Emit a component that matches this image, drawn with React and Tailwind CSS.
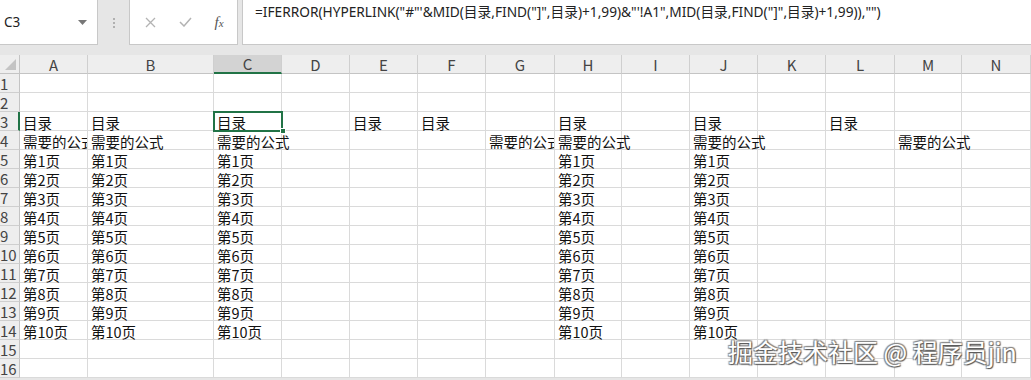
import React from "react";

const COLS = [
  ["A", "w-[68px]"],
  ["B", "w-[126px]"],
  ["C", "w-[68px]"],
  ["D", "w-[68px]"],
  ["E", "w-[68px]"],
  ["F", "w-[68px]"],
  ["G", "w-[69px]"],
  ["H", "w-[67px]"],
  ["I", "w-[68px]"],
  ["J", "w-[68px]"],
  ["K", "w-[68px]"],
  ["L", "w-[69px]"],
  ["M", "w-[67px]"],
  ["N", "w-[69px]"],
];

const DATA = {
  3: { A: "目录", B: "目录", C: "目录", E: "目录", F: "目录", H: "目录", J: "目录", L: "目录" },
  4: { A: "需要的公式", B: "需要的公式", C: "需要的公式", G: "需要的公式", H: "需要的公式", J: "需要的公式", M: "需要的公式" },
};
for (let i = 5; i <= 14; i++) {
  const t = `第${i - 4}页`;
  DATA[i] = { A: t, B: t, C: t, H: t, J: t };
}

const CLIP = { "4A": true, "4G": true };

const cellFont = { fontFamily: '"Noto Sans CJK SC", "Noto Sans", sans-serif' };
const uiFont = { fontFamily: '"Noto Sans", "Noto Sans CJK SC", sans-serif' };

export default function App() {
  const rows = Array.from({ length: 16 }, (_, i) => i + 1);
  return (
    <div className="w-[1031px] h-[380px] overflow-hidden bg-[#e6e6e6] relative" style={uiFont}>
      {/* formula bar */}
      <div className="flex h-[45px]">
        <div className="w-[98px] bg-white border-r border-b border-[#c8c8c8] flex items-center justify-between pl-[4px] pr-[10px]">
          <span className="text-[13.5px] text-[#222] pt-[1px]">C3</span>
          <svg width="9" height="5" viewBox="0 0 9 5"><path d="M0 0 L9 0 L4.5 5 Z" fill="#777" /></svg>
        </div>
        <div className="w-[31px] flex flex-col items-center justify-center gap-[2px]">
          <div className="w-[2px] h-[2px] bg-[#b0b0b0]" />
          <div className="w-[2px] h-[2px] bg-[#b0b0b0]" />
          <div className="w-[2px] h-[2px] bg-[#b0b0b0]" />
        </div>
        <div className="w-[109px] bg-white border-r border-b border-l border-[#c8c8c8] flex items-center">
          <div className="w-[38px] flex justify-center pl-[2px]">
            <svg width="11" height="11" viewBox="0 0 11 11"><path d="M1 1 L10 10 M10 1 L1 10" stroke="#b3b3b3" strokeWidth="1.3" /></svg>
          </div>
          <div className="w-[34px] flex justify-center">
            <svg width="13" height="10" viewBox="0 0 13 10"><path d="M1 5 L5 9 L12 1" stroke="#b3b3b3" strokeWidth="1.5" fill="none" /></svg>
          </div>
          <div className="w-[34px] flex justify-center">
            <span className="italic text-[#555] text-[15px] leading-none" style={{ fontFamily: '"Liberation Serif", serif' }}>
              f<span className="text-[11px]">x</span>
            </span>
          </div>
        </div>
        <div className="w-[4px]" />
        <div className="flex-1 bg-white border-l border-b border-[#c8c8c8] pl-[12px] pt-[2px]">
          <div className="text-[13.7px] leading-[20px] text-[#222] whitespace-nowrap" style={uiFont}>
            =IFERROR(HYPERLINK("#"'&amp;MID(目录,FIND("]",目录)+1,99)&amp;"'!A1",MID(目录,FIND("]",目录)+1,99)),"")
          </div>
        </div>
      </div>
      <div className="h-[10px]" />

      {/* sheet */}
      <div className="relative bg-white">
        {/* column header row */}
        <div className="flex h-[19px] bg-[#eeeeee]">
          <div className="w-[20px] border-r border-b border-[#c4c4c4] relative">
            <svg className="absolute right-[3px] bottom-[3px]" width="11" height="11" viewBox="0 0 11 11"><path d="M11 0 L11 11 L0 11 Z" fill="#c4c4c4" /></svg>
          </div>
          {COLS.map(([c, w]) => (
            <div
              key={c}
              className={`${w} shrink-0 flex items-center justify-center text-[15px] text-[#444] border-r border-[#cfcfcf] ${c === "C" ? "bg-[#d3d3d3] border-b-2 border-b-[#217346]" : "border-b border-b-[#c4c4c4]"}`}
              style={cellFont}
            >
              <span className="leading-none">{c}</span>
            </div>
          ))}
        </div>

        {rows.map((r) => (
          <div key={r} className="flex h-[19px]">
            <div
              className={`w-[20px] shrink-0 bg-[#eeeeee] border-b border-[#cfcfcf] text-[15px] text-[#444] leading-[19px] overflow-hidden whitespace-nowrap ${r === 3 ? "bg-[#d3d3d3] border-r-2 border-r-[#217346]" : "border-r border-r-[#c4c4c4]"}`}
              style={cellFont}
            >
              {r}
            </div>
            {COLS.map(([c, w]) => {
              const v = DATA[r] && DATA[r][c];
              const clip = CLIP[`${r}${c}`];
              return (
                <div
                  key={c}
                  className={`${w} shrink-0 relative border-r border-b border-[#dadada] ${clip ? "overflow-hidden" : ""}`}
                >
                  {v && (
                    <span
                      className="absolute left-[3px] top-[1px] text-[14.5px] leading-[19px] text-[#111] whitespace-nowrap z-10"
                      style={cellFont}
                    >
                      {v}
                    </span>
                  )}
                </div>
              );
            })}
          </div>
        ))}

        {/* selection C3 */}
        <div className="absolute left-[213px] top-[56px] w-[70px] h-[21px] border-2 border-[#217346] z-20" />
        <div className="absolute left-[280px] top-[73px] w-[6px] h-[6px] bg-[#217346] border border-white z-30" />
      </div>

      {/* watermark */}
      <div
        className="absolute left-[728px] top-[334px] text-[25px] leading-[34px] text-white whitespace-nowrap z-40"
        style={{
          ...cellFont,
          textShadow: "1px 1px 1px #555, -1px -1px 1px #888, 1px -1px 1px #888, -1px 1px 1px #888",
        }}
      >
        掘金技术社区 @ 程序员jin
      </div>
    </div>
  );
}
